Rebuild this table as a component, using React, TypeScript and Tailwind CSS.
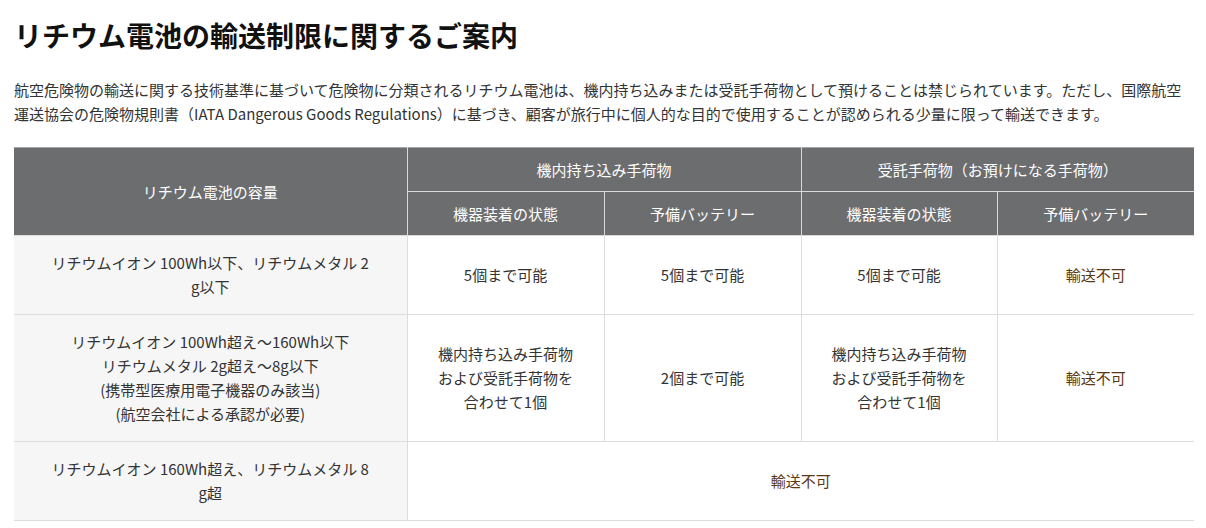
import React from 'react'

const font = { fontFamily: '"Noto Sans CJK JP", "Noto Sans", sans-serif' }

const NG = () => <span className="text-[#5a3815]">輸送不可</span>

export default function App() {
  const th = 'border border-[#d9d9d9] bg-[#6c6d6f] text-white font-normal px-3 py-[10px] leading-[23px]'
  const td = 'border border-[#dddddd] px-5 py-[15px] text-center align-middle'
  const first = 'border border-[#dddddd] bg-[#f6f6f6] px-5 py-[15px] text-center align-middle'

  return (
    <div className="bg-white min-h-[528px] px-[14px] pt-[14px] text-[#333]" style={font}>
      <h1 className="text-[28px] leading-[42px] font-bold text-[#111]">
        リチウム電池の輸送制限に関するご案内
      </h1>

      <p className="mt-[22px] text-[15px] leading-[24px] w-[1180px]">
        航空危険物の輸送に関する技術基準に基づいて危険物に分類されるリチウム電池は、機内持ち込みまたは受託手荷物として預けることは禁じられています。ただし、国際航空運送協会の危険物規則書（IATA Dangerous Goods Regulations）に基づき、顧客が旅行中に個人的な目的で使用することが認められる少量に限って輸送できます。
      </p>

      <table className="mt-[21px] w-[1180px] border-collapse table-fixed text-[15px] leading-[24px] border-t border-t-[#a5a5a5] [&_th]:border-t-0 [&_tr>*:first-child]:border-l-0 [&_tr>*:last-child]:border-r-0">
        <colgroup>
          <col className="w-[393px]" />
          <col className="w-[197px]" />
          <col className="w-[197px]" />
          <col className="w-[196px]" />
          <col className="w-[197px]" />
        </colgroup>
        <thead>
          <tr className="[&>th]:border-t-[#a5a5a5]">
            <th rowSpan={2} className={th + ' border-b-[#dddddd]'}>リチウム電池の容量</th>
            <th colSpan={2} className={th}>機内持ち込み手荷物</th>
            <th colSpan={2} className={th}>受託手荷物（お預けになる手荷物）</th>
          </tr>
          <tr>
            <th className={th + ' border-t'}>機器装着の状態</th>
            <th className={th + ' border-t'}>予備バッテリー</th>
            <th className={th + ' border-t'}>機器装着の状態</th>
            <th className={th + ' border-t'}>予備バッテリー</th>
          </tr>
        </thead>
        <tbody>
          <tr>
            <td className={first}>
              リチウムイオン 100Wh以下、リチウムメタル 2<br />g以下
            </td>
            <td className={td}>5個まで可能</td>
            <td className={td}>5個まで可能</td>
            <td className={td}>5個まで可能</td>
            <td className={td}><NG /></td>
          </tr>
          <tr>
            <td className={first}>
              リチウムイオン 100Wh超え～160Wh以下<br />
              リチウムメタル 2g超え～8g以下<br />
              (携帯型医療用電子機器のみ該当)<br />
              (航空会社による承認が必要)
            </td>
            <td className={td}>
              機内持ち込み手荷物<br />
              および受託手荷物を<br />
              合わせて1個
            </td>
            <td className={td}>2個まで可能</td>
            <td className={td}>
              機内持ち込み手荷物<br />
              および受託手荷物を<br />
              合わせて1個
            </td>
            <td className={td}><NG /></td>
          </tr>
          <tr>
            <td className={first}>
              リチウムイオン 160Wh超え、リチウムメタル 8<br />g超
            </td>
            <td colSpan={4} className={td}><NG /></td>
          </tr>
        </tbody>
      </table>
    </div>
  )
}
